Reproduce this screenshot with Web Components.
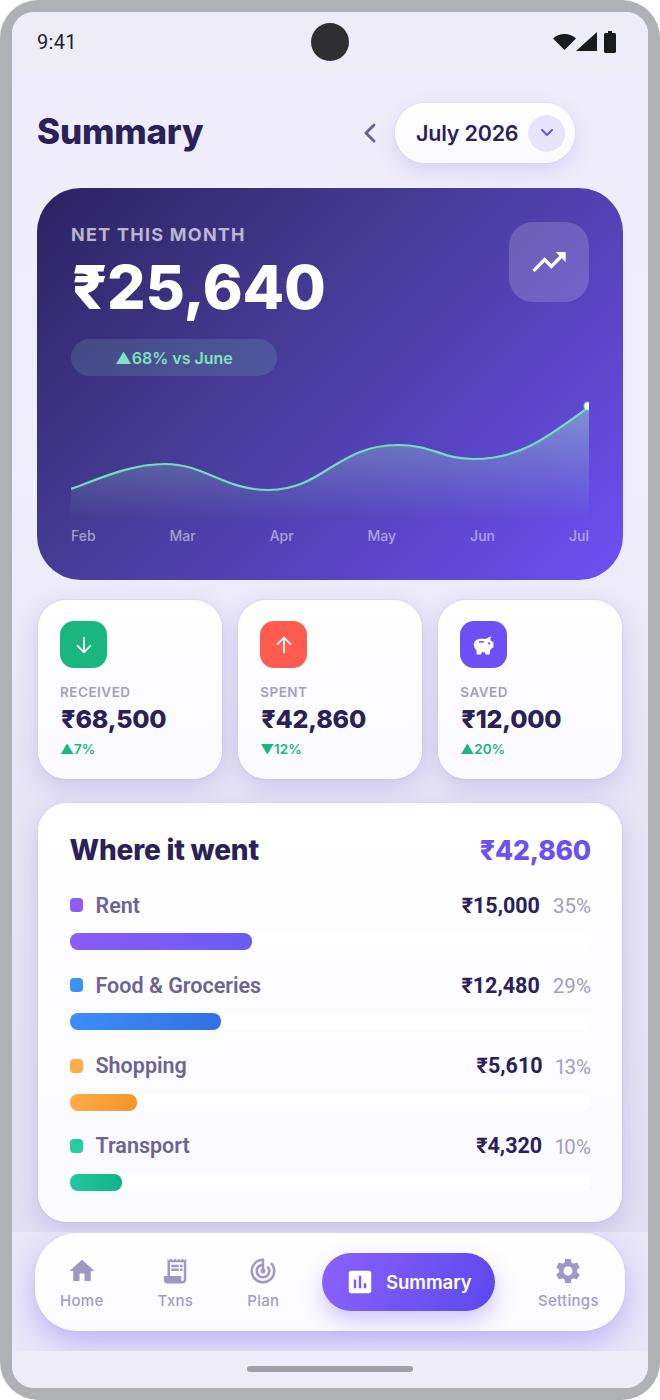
<!DOCTYPE html>
<html>
<head>
<meta charset="utf-8">
<title>Summary</title>
<style>
  html, body { margin: 0; background: #fff; }
  body { font-family: "Inter", "Liberation Sans", sans-serif; color: #2a2158; }
</style>
</head>
<body>

<phone-frame>
  <status-bar slot="top"></status-bar>

  <summary-header title="Summary" month="July 2026"></summary-header>
  <hero-card amount="₹25,640" change="▲68% vs June"></hero-card>

  <div style="display:grid;grid-template-columns:repeat(3,1fr);gap:16.5px;margin:20px 1px 0;">
    <stat-card label="RECEIVED" value="₹68,500" delta="▲7%" color="#1ab67f">
      <svg viewBox="0 0 24 24" fill="none" stroke="#fff" stroke-width="2" stroke-linecap="round" stroke-linejoin="round"><path d="M12 4v16M5 13l7 7 7-7"/></svg>
    </stat-card>
    <stat-card label="SPENT" value="₹42,860" delta="▼12%" color="#ff5b4f">
      <svg viewBox="0 0 24 24" fill="none" stroke="#fff" stroke-width="2" stroke-linecap="round" stroke-linejoin="round"><path d="M12 20V4M5 11l7-7 7 7"/></svg>
    </stat-card>
    <stat-card label="SAVED" value="₹12,000" delta="▲20%" color="#6c50f5">
      <svg viewBox="0 0 24 24" style="width:27px;height:27px"><path fill="#fff" d="M19.800 9.600 18 8.200c.1-1.200.5-2.200 1-3-1.500 0-3 .5-4 1.600H9.500C6 6.800 3.400 9 3.400 12.300c0 2 .9 3.700 2.400 4.800V20c0 .5.400.9.900.9h2.500c.5 0 .9-.4.900-.9v-1.200h3.300V20c0 .5.400.9.900.9h2.500c.5 0 .9-.4.900-.9v-2.800c.8-.6 1.400-1.400 1.800-2.300h1.300V9.600z"/><path fill="#6c50f5" d="M8 9h4.500v1.300H8z"/><circle fill="#6c50f5" cx="17" cy="11" r="1"/></svg>
    </stat-card>
  </div>

  <spend-card title="Where it went" total="₹42,860">
    <spend-row name="Rent" amount="₹15,000" pct="35" dot="#8f5cf7" from="#8a5cf6" to="#6a5af5"></spend-row>
    <spend-row name="Food &amp; Groceries" amount="₹12,480" pct="29" dot="#3f90fb" from="#3c8dfa" to="#3470e4"></spend-row>
    <spend-row name="Shopping" amount="₹5,610" pct="13" dot="#ffae45" from="#ffae45" to="#f2932a"></spend-row>
    <spend-row name="Transport" amount="₹4,320" pct="10" dot="#22cfa0" from="#22c99c" to="#14b088"></spend-row>
  </spend-card>

  <bottom-nav slot="nav">
    <nav-item label="Home"><svg viewBox="0 0 24 24"><path d="M10 20v-6h4v6h5v-8h3L12 3 2 12h3v8z"/></svg></nav-item>
    <nav-item label="Txns"><svg viewBox="0 0 24 24"><path d="M19.500 3.500L18 2l-1.500 1.500L15 2l-1.500 1.500L12 2l-1.500 1.500L9 2 7.500 3.500 6 2v14H3v3c0 1.660 1.340 3 3 3h12c1.660 0 3-1.340 3-3V2l-1.500 1.500zM19 19c0 .55-.45 1-1 1s-1-.45-1-1v-3H8V5h11v14z"/><path d="M9 7h6v2H9zm7 0h2v2h-2zm-7 3h6v2H9zm7 0h2v2h-2z"/></svg></nav-item>
    <nav-item label="Plan"><svg viewBox="0 0 24 24"><path d="M19.070 4.930l-1.410 1.410C19.100 7.790 20 9.790 20 12c0 4.420-3.580 8-8 8s-8-3.580-8-8c0-4.080 3.050-7.440 7-7.930v2.020C8.160 6.570 6 9.030 6 12c0 3.310 2.690 6 6 6s6-2.690 6-6c0-1.660-.67-3.160-1.760-4.240l-1.410 1.410C15.550 9.900 16 10.900 16 12c0 2.210-1.790 4-4 4s-4-1.790-4-4c0-1.860 1.280-3.410 3-3.860v2.140c-.6.350-1 .98-1 1.720 0 1.100.9 2 2 2s2-.9 2-2c0-.74-.4-1.380-1-1.720V2h-1C6.480 2 2 6.480 2 12s4.480 10 10 10 10-4.480 10-10c0-2.760-1.120-5.260-2.930-7.070z"/></svg></nav-item>
    <nav-item label="Summary" active><svg viewBox="0 0 24 24"><path d="M19 3H5c-1.100 0-2 .9-2 2v14c0 1.100.9 2 2 2h14c1.100 0 2-.9 2-2V5c0-1.100-.9-2-2-2zM9 17H7v-7h2v7zm4 0h-2V7h2v10zm4 0h-2v-4h2v4z"/></svg></nav-item>
    <nav-item label="Settings"><svg viewBox="0 0 24 24"><path d="M19.140 12.940c.04-.3.06-.61.06-.94 0-.32-.02-.64-.07-.94l2.030-1.580c.18-.14.23-.41.12-.61l-1.920-3.320c-.12-.22-.37-.29-.59-.22l-2.390.96c-.5-.38-1.030-.7-1.620-.94l-.36-2.540c-.04-.24-.24-.41-.48-.41h-3.840c-.24 0-.43.17-.47.41l-.36 2.540c-.59.24-1.130.57-1.620.94l-2.390-.96c-.22-.08-.47 0-.59.22L2.740 8.870c-.12.21-.08.47.12.61l2.030 1.580c-.05.3-.09.63-.09.94s.02.64.07.94l-2.030 1.580c-.18.14-.23.41-.12.61l1.920 3.320c.12.22.37.29.59.22l2.390-.96c.5.38 1.030.7 1.620.94l.36 2.540c.05.24.24.41.48.41h3.840c.24 0 .44-.17.47-.41l.36-2.540c.59-.24 1.130-.56 1.620-.94l2.390.96c.22.08.47 0 .59-.22l1.920-3.320c.12-.22.07-.47-.12-.61l-2.010-1.580zM12 15.600c-1.980 0-3.600-1.620-3.600-3.600s1.620-3.600 3.600-3.600 3.600 1.620 3.600 3.600-1.620 3.600-3.600 3.600z"/></svg></nav-item>
  </bottom-nav>
</phone-frame>

<script>
class PhoneFrame extends HTMLElement {
  constructor() {
    super();
    this.attachShadow({ mode: 'open' });
    this.shadowRoot.innerHTML = `
      <style>
        :host { display: block; width: 660px; height: 1400px; box-sizing: border-box; padding: 12px; background: #b0b1b5; border-radius: 38px; }
        .screen { height: 100%; display: flex; flex-direction: column; overflow: hidden; border-radius: 22px; background: #eeecf7; }
        .main { flex: 1; min-height: 0; display: flex; flex-direction: column; padding: 31px 25px 0; background: linear-gradient(180deg, #efedfb 0%, #f0eefc 35%, #e8e5f6 60%, #e3dff2 100%); }
        .gesture { height: 37px; flex: none; display: flex; justify-content: center; padding-top: 15px; box-sizing: border-box; background: #eeecf7; }
        .gesture i { width: 166px; height: 6px; border-radius: 3px; background: #a0a0a6; }
      </style>
      <div class="screen">
        <slot name="top"></slot>
        <div class="main"><slot></slot></div>
        <slot name="nav"></slot>
        <div class="gesture"><i></i></div>
      </div>`;
  }
}

class StatusBar extends HTMLElement {
  constructor() {
    super();
    this.attachShadow({ mode: 'open' });
    this.shadowRoot.innerHTML = `
      <style>
        :host { display: grid; grid-template-columns: 1fr auto 1fr; align-items: center; height: 60px; padding: 0 25px; background: #eeecf7; flex: none; }
        .time { font: 400 20px "Roboto", sans-serif; color: #23232a; letter-spacing: .3px; }
        .hole { width: 38px; height: 38px; border-radius: 50%; background: #2f2f31; }
        .icons { justify-self: end; display: flex; align-items: center; margin-right: 5px; }
        svg { display: block; }
      </style>
      <span class="time">9:41</span>
      <span class="hole"></span>
      <span class="icons">
        <svg width="65" height="22" viewBox="0 0 65 22" fill="#181c1a">
          <path d="M0 7.500C3 4.500 7 3 11.500 3S20 4.500 23 7.500L11.500 19z"/>
          <path d="M23 20 44 1v19z"/>
          <path d="M51 3.500c0-.8.6-1.500 1.500-1.500H55V0h4v2h2.500c.9 0 1.500.7 1.500 1.500v17c0 .8-.6 1.500-1.500 1.500h-9c-.9 0-1.500-.7-1.500-1.500z"/>
        </svg>
      </span>`;
  }
}

class SummaryHeader extends HTMLElement {
  constructor() {
    super();
    this.attachShadow({ mode: 'open' });
    this.shadowRoot.innerHTML = `
      <style>
        :host { display: flex; align-items: center; height: 60px; flex: none; padding-right: 48px; }
        h1 { margin: -4px auto 0 0; font: 800 35px "Inter", sans-serif; color: #2a2158; letter-spacing: -.2px; }
        .back { width: 14px; height: 22px; margin-right: 18px; display: block; }
        .pill { width: 180px; height: 60px; box-sizing: border-box; display: flex; align-items: center; justify-content: space-between; padding: 0 10px 0 21px; border-radius: 30px; background: linear-gradient(180deg, #fff, #faf9ff); box-shadow: 0 8px 20px rgba(90,70,190,.16), 0 0 0 1px rgba(120,100,220,.05); }
        .pill span { font: 600 21.500px "Inter", sans-serif; color: #2a2158; letter-spacing: -.2px; white-space: nowrap; }
        .pill b { width: 37px; height: 37px; flex: none; border-radius: 50%; background: #e9e4fd; display: flex; align-items: center; justify-content: center; }
      </style>
      <h1></h1>
      <svg class="back" viewBox="0 0 14 22" fill="none" stroke="#6a6394" stroke-width="3" stroke-linecap="round" stroke-linejoin="round"><path d="M11 3 3 11l8 8"/></svg>
      <div class="pill"><span></span><b><svg width="14" height="10" viewBox="0 0 14 10" fill="none" stroke="#6c50f5" stroke-width="2" stroke-linecap="round" stroke-linejoin="round"><path d="M2 2l5 5 5-5"/></svg></b></div>`;
    this.shadowRoot.querySelector('h1').textContent = this.getAttribute('title');
    this.shadowRoot.querySelector('.pill span').textContent = this.getAttribute('month');
  }
}

class HeroCard extends HTMLElement {
  constructor() {
    super();
    this.attachShadow({ mode: 'open' });
    this.shadowRoot.innerHTML = `
      <style>
        :host { display: block; flex: none; margin-top: 25px; height: 392px; box-sizing: border-box; padding: 34px; border-radius: 44px; background: linear-gradient(135deg, #2c2260 0%, #453a92 38%, #5a44c4 70%, #6d50f5 100%); color: #fff; }
        .top { display: flex; justify-content: space-between; align-items: flex-start; height: 117px; }
        .label { font: 700 18px/26px "Inter", sans-serif; letter-spacing: 1.250px; color: rgba(255,255,255,.66); }
        .amount { font: 800 60.500px/64px "Inter", sans-serif; margin: 7px 0 0 1px; letter-spacing: -.2px; }
        .icon { width: 80px; height: 80px; border-radius: 24px; background: rgba(255,255,255,.17); display: flex; align-items: center; justify-content: center; }
        .icon svg { width: 40px; height: 40px; fill: #fff; }
        .change { width: 206px; height: 37px; border-radius: 19px; background: rgba(125,225,190,.16); display: flex; align-items: center; justify-content: center; font: 600 16px "Inter", sans-serif; color: #7de3bd; }
        .chart { display: block; width: 518px; height: 120px; margin-top: 24px; overflow: hidden; }
        .months { display: flex; justify-content: space-between; margin-top: 6px; font: 500 14px/20px "Inter", sans-serif; color: rgba(255,255,255,.5); }
      </style>
      <div class="top">
        <div>
          <div class="label">NET THIS MONTH</div>
          <div class="amount"></div>
        </div>
        <div class="icon"><svg viewBox="0 0 24 24"><path d="M16 6l2.290 2.290-4.880 4.880-4-4L2 16.590 3.410 18l6-6 4 4 6.300-6.290L22 12V6z"/></svg></div>
      </div>
      <div class="change"></div>
      <svg class="chart" viewBox="0 0 518 120">
        <defs>
          <linearGradient id="area" x1="0" y1="0" x2="0" y2="120" gradientUnits="userSpaceOnUse">
            <stop offset="0" stop-color="#a5e8d0" stop-opacity=".5"/>
            <stop offset="1" stop-color="#8fd8d0" stop-opacity="0"/>
          </linearGradient>
        </defs>
        <path fill="url(#area)" d="M0 89C30 78 60 64 94 64 134 64 152 90 198 90 252 90 266 45 327 45 362 45 370 59 403 59 450 59 478 36 518 7V120H0z"/>
        <path fill="none" stroke="#6fe0b8" stroke-width="2.200" d="M0 89C30 78 60 64 94 64 134 64 152 90 198 90 252 90 266 45 327 45 362 45 370 59 403 59 450 59 478 36 518 7"/>
        <circle cx="517" cy="6" r="4" fill="#fff" stroke="#6fe0b8" stroke-opacity=".4" stroke-width="2"/>
      </svg>
      <div class="months"><span>Feb</span><span>Mar</span><span>Apr</span><span>May</span><span>Jun</span><span>Jul</span></div>`;
    this.shadowRoot.querySelector('.amount').textContent = this.getAttribute('amount');
    this.shadowRoot.querySelector('.change').textContent = this.getAttribute('change');
  }
}

class StatCard extends HTMLElement {
  constructor() {
    super();
    this.attachShadow({ mode: 'open' });
    this.shadowRoot.innerHTML = `
      <style>
        :host { display: block; height: 179px; box-sizing: border-box; padding: 21px 22px 0; border-radius: 28px; background: linear-gradient(180deg, #fff, #fafaff); box-shadow: 0 8px 24px rgba(90,70,190,.2), 0 0 0 1px rgba(120,100,220,.07); }
        .icon { width: 47px; height: 47px; border-radius: 14px; display: flex; align-items: center; justify-content: center; }
        ::slotted(svg) { width: 22px; height: 22px; display: block; }
        .label { font: 600 13.500px/18px "Inter", sans-serif; letter-spacing: .5px; color: #a39cc8; margin-top: 15px; }
        .value { font: 800 25px/32px "Inter", sans-serif; color: #2a2158; margin: 2px 0 0 1px; letter-spacing: -.2px; }
        .delta { font: 600 13.500px/18px "Inter", sans-serif; color: #1ab67f; margin-top: 5px; }
      </style>
      <div class="icon"><slot></slot></div>
      <div class="label"></div>
      <div class="value"></div>
      <div class="delta"></div>`;
    this.shadowRoot.querySelector('.icon').style.background = this.getAttribute('color');
    this.shadowRoot.querySelector('.label').textContent = this.getAttribute('label');
    this.shadowRoot.querySelector('.value').textContent = this.getAttribute('value');
    this.shadowRoot.querySelector('.delta').textContent = this.getAttribute('delta');
  }
}

class SpendCard extends HTMLElement {
  constructor() {
    super();
    this.attachShadow({ mode: 'open' });
    this.shadowRoot.innerHTML = `
      <style>
        :host { display: block; flex: none; margin: 24px 1px 0; height: 419px; box-sizing: border-box; padding: 29px 31px 0 31.500px; border-radius: 28px; background: linear-gradient(180deg, #fff, #fafaff); box-shadow: 0 8px 24px rgba(90,70,190,.2), 0 0 0 1px rgba(120,100,220,.07); }
        .head { display: flex; justify-content: space-between; align-items: center; height: 36px; margin-bottom: 23px; }
        .title { font: 800 28px "Inter", sans-serif; color: #2a2158; letter-spacing: -.2px; }
        .total { font: 800 26.500px "Inter", sans-serif; color: #6a50f5; letter-spacing: -.2px; }
      </style>
      <div class="head"><span class="title"></span><span class="total"></span></div>
      <slot></slot>`;
    this.shadowRoot.querySelector('.title').textContent = this.getAttribute('title');
    this.shadowRoot.querySelector('.total').textContent = this.getAttribute('total');
  }
}

class SpendRow extends HTMLElement {
  constructor() {
    super();
    this.attachShadow({ mode: 'open' });
    this.shadowRoot.innerHTML = `
      <style>
        :host { display: block; height: 80.300px; }
        .line { display: flex; align-items: center; height: 28px; }
        .dot { width: 13px; height: 14px; border-radius: 4px; margin-right: 13px; flex: none; }
        .name { font: 600 21.500px "Roboto", sans-serif; color: #6c6492; margin-right: auto; }
        .amount { font: 700 21.500px "Roboto", sans-serif; color: #2a2158; }
        .pct { font: 400 20.500px "Roboto", sans-serif; font-variant-numeric: proportional-nums; color: #a39cc8; margin-left: 13px; position: relative; top: 1px; }
        .track { height: 17px; margin-top: 14px; border-radius: 8px; background: #fff; }
        .fill { height: 100%; border-radius: 8px; }
      </style>
      <div class="line"><span class="dot"></span><span class="name"></span><span class="amount"></span><span class="pct"></span></div>
      <div class="track"><div class="fill"></div></div>`;
    const pct = this.getAttribute('pct');
    this.shadowRoot.querySelector('.dot').style.background = this.getAttribute('dot');
    this.shadowRoot.querySelector('.name').textContent = this.getAttribute('name');
    this.shadowRoot.querySelector('.amount').textContent = this.getAttribute('amount');
    this.shadowRoot.querySelector('.pct').textContent = pct + '%';
    const fill = this.shadowRoot.querySelector('.fill');
    fill.style.width = pct + '%';
    fill.style.background = `linear-gradient(100deg, ${this.getAttribute('from')}, ${this.getAttribute('to')})`;
  }
}

class BottomNav extends HTMLElement {
  constructor() {
    super();
    this.attachShadow({ mode: 'open' });
    this.shadowRoot.innerHTML = `
      <style>
        :host { display: block; flex: none; height: 119px; box-sizing: border-box; padding: 1px 23px 20px; overflow: hidden; background: #eae7f8; }
        .bar { height: 98px; box-sizing: border-box; padding: 0 25px; display: flex; align-items: center; gap: 54px; border-radius: 42px; background: linear-gradient(180deg, #fff, #fbfaff); box-shadow: 0 12px 30px rgba(108,80,240,.34), 0 0 0 1px rgba(120,100,220,.06); }
      </style>
      <div class="bar"><slot></slot></div>`;
  }
}

class NavItem extends HTMLElement {
  constructor() {
    super();
    this.attachShadow({ mode: 'open' });
    this.shadowRoot.innerHTML = `
      <style>
        :host { display: flex; flex-direction: column; align-items: center; gap: 5px; padding-top: 3px; color: #a39cc8; font: 500 15px/20px "Inter", sans-serif; letter-spacing: .3px; }
        ::slotted(svg) { width: 30px; height: 30px; fill: #9f98c5; display: block; }
        :host([active]) { flex-direction: row; gap: 11px; width: 173px; height: 58px; box-sizing: border-box; padding: 0 0 0 23px; margin: 0 -11px 0 -11.500px; border-radius: 29px; color: #fff; font: 600 18.500px "Inter", sans-serif; letter-spacing: 0; background: linear-gradient(110deg, #8a62fb, #5c48ee); box-shadow: 0 10px 22px rgba(108,80,240,.3); }
        :host([active]) ::slotted(svg) { fill: #fff; }
      </style>
      <slot></slot><span></span>`;
    this.shadowRoot.querySelector('span').textContent = this.getAttribute('label');
  }
}

customElements.define('phone-frame', PhoneFrame);
customElements.define('status-bar', StatusBar);
customElements.define('summary-header', SummaryHeader);
customElements.define('hero-card', HeroCard);
customElements.define('stat-card', StatCard);
customElements.define('spend-card', SpendCard);
customElements.define('spend-row', SpendRow);
customElements.define('bottom-nav', BottomNav);
customElements.define('nav-item', NavItem);
</script>
</body>
</html>
